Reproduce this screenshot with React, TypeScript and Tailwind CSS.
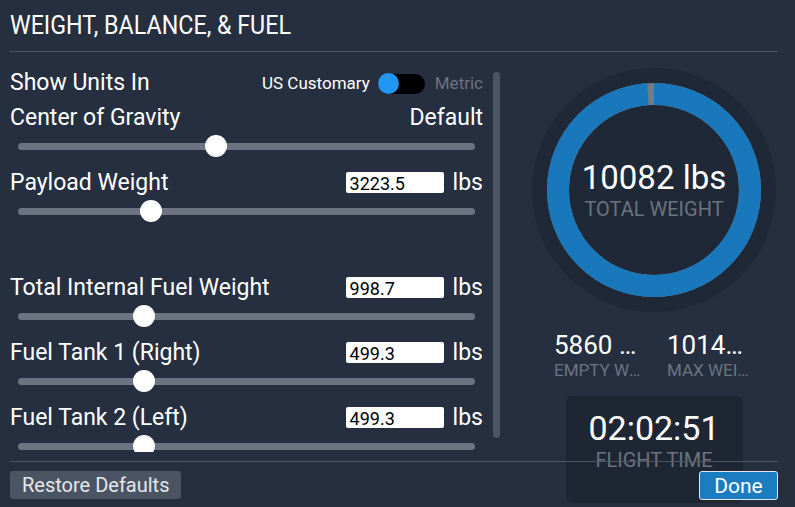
import React from 'react';

const font = "font-['Roboto','Liberation_Sans',sans-serif]";

type SliderProps = { thumb: string };

// thumb class holds the left offset of the knob over the track
function Slider({ thumb }: SliderProps) {
  return (
    <div className="relative mx-[8px] flex h-[22px] items-center">
      <div className="h-[7px] w-full rounded-full bg-[#6b7480]" />
      <div className={`absolute top-0 h-[22px] w-[22px] rounded-full bg-white ${thumb}`} />
    </div>
  );
}

function NumberRow({ label, value }: { label: string; value: string }) {
  return (
    <div className="flex h-[35px] items-center justify-between">
      <span className="pt-[2px] text-[23px] text-white">{label}</span>
      <div className="flex items-center">
        <div className="h-[21px] w-[98px] overflow-hidden rounded-[2px] bg-white pl-[4px] pt-[2px] text-[18px] leading-[20px] text-black">
          {value}
        </div>
        <span className="ml-[9px] pt-[2px] text-[23px] text-white">lbs</span>
      </div>
    </div>
  );
}

function Stat({ value, label }: { value: string; label: string }) {
  return (
    <div className="w-[87px]">
      <div className="truncate text-[26px] leading-[30px] text-white">{value}</div>
      <div className="truncate text-[17px] leading-[20px] text-[#6b7480]">{label}</div>
    </div>
  );
}

function Donut() {
  const r = 96;
  const c = 2 * Math.PI * r;
  const frac = 0.988;
  return (
    <svg width="244" height="244" viewBox="0 0 244 244">
      <circle cx="122" cy="122" r="122" fill="#1f2836" />
      <circle cx="122" cy="122" r={r} fill="none" stroke="#737b86" strokeWidth="22" />
      <circle
        cx="122"
        cy="122"
        r={r}
        fill="none"
        stroke="#1878bb"
        strokeWidth="22"
        strokeDasharray={`${c * frac} ${c}`}
        transform="rotate(-90 122 122)"
      />
    </svg>
  );
}

export default function App() {
  return (
    <div className={`${font} flex h-[507px] w-[795px] flex-col overflow-hidden bg-[#252f3f] antialiased`}>
      {/* header */}
      <div className="flex h-[51px] items-center px-[10px]">
        <h1 className="origin-left scale-x-[0.895] whitespace-nowrap text-[26px] text-white">
          WEIGHT, BALANCE, &amp; FUEL
        </h1>
      </div>
      <div className="ml-[10px] mr-[17px] h-px bg-[#4b5563]" />

      {/* body */}
      <div className="flex h-[400px]">
        <div className="flex w-[500px]">
          <div className="h-[400px] w-[483px] overflow-hidden pl-[10px] pt-[13px]">
            <div className="flex h-[35px] items-center justify-between">
              <span className="pt-[2px] text-[23px] text-white">Show Units In</span>
              <div className="flex items-center pt-[2px]">
                <span className="text-[17px] text-white">US Customary</span>
                <div className="relative ml-[8px] h-[20px] w-[47px] rounded-full bg-black">
                  <div className="absolute left-0 top-[-1px] h-[21px] w-[21px] rounded-full bg-[#2196f3]" />
                </div>
                <span className="ml-[10px] text-[17px] text-[#6b7480]">Metric</span>
              </div>
            </div>

            <div className="flex h-[35px] items-center justify-between">
              <span className="pt-[2px] text-[23px] text-white">Center of Gravity</span>
              <span className="pt-[2px] text-[23px] text-white">Default</span>
            </div>
            <div className="mb-[8px]">
              <Slider thumb="left-[187px]" />
            </div>

            <NumberRow label="Payload Weight" value="3223.5" />
            <div className="mb-[48px]">
              <Slider thumb="left-[122px]" />
            </div>

            <NumberRow label="Total Internal Fuel Weight" value="998.7" />
            <div className="mb-[8px]">
              <Slider thumb="left-[115px]" />
            </div>

            <NumberRow label="Fuel Tank 1 (Right)" value="499.3" />
            <div className="mb-[8px]">
              <Slider thumb="left-[115px]" />
            </div>

            <NumberRow label="Fuel Tank 2 (Left)" value="499.3" />
            <div className="mb-[8px]">
              <Slider thumb="left-[115px]" />
            </div>
          </div>
          <div className="ml-[10px] mt-[20px] h-[366px] w-[7px] rounded-full bg-[#4b5563]" />
        </div>

        <div className="ml-[13px] flex flex-1 flex-col items-center pt-[16px]">
          <div className="relative h-[244px] w-[244px]">
            <Donut />
            <div className="absolute inset-0 flex flex-col items-center justify-center">
              <div className="text-[33px] leading-[38px] text-white">10082 lbs</div>
              <div className="text-[20px] leading-[24px] text-[#6b7480]">TOTAL WEIGHT</div>
            </div>
          </div>

          <div className="mt-[18px] flex gap-[26px]">
            <Stat value="5860 lbs" label="EMPTY WEIGHT" />
            <Stat value="10140 lbs" label="MAX WEIGHT" />
          </div>

          <div className="mt-[16px] flex h-[107px] w-[177px] shrink-0 flex-col items-center rounded-[6px] bg-[#1e2634] pt-[12px]">
            <div className="text-[34px] leading-[40px] text-white">02:02:51</div>
            <div className="text-[20px] leading-[24px] text-[#6b7480]">FLIGHT TIME</div>
          </div>
        </div>
      </div>

      {/* footer */}
      <div className="relative ml-[10px] mr-[17px] mt-[9px] flex items-start justify-between border-t border-[#4b5563] pt-[9px]">
        <button className="h-[28px] rounded-[3px] bg-[#4a5462] px-[12px] text-[20px] leading-[28px] text-[#e5e7eb]">
          Restore Defaults
        </button>
        <button className="h-[29px] w-[79px] rounded-[3px] border border-[#e5e7eb] bg-[#1b7dc0] text-[21px] leading-[26px] text-white">
          Done
        </button>
      </div>
    </div>
  );
}
